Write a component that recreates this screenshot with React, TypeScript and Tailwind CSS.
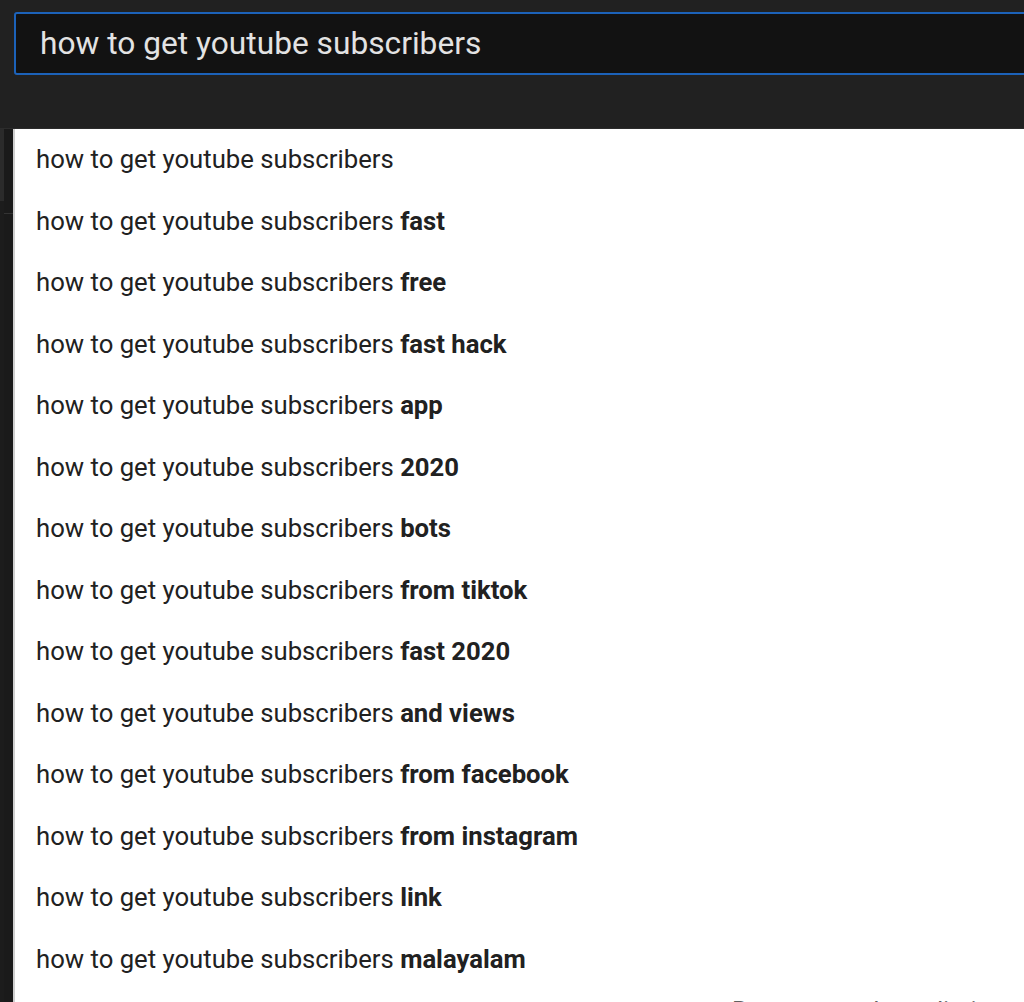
import React from 'react';

const query = 'how to get youtube subscribers';

const suggestions: string[] = [
  '',
  'fast',
  'free',
  'fast hack',
  'app',
  '2020',
  'bots',
  'from tiktok',
  'fast 2020',
  'and views',
  'from facebook',
  'from instagram',
  'link',
  'malayalam',
];

export default function App() {
  return (
    <div className="h-[1002px] w-[1024px] overflow-hidden bg-[#212121] font-['Roboto','Liberation_Sans',sans-serif]">
      {/* search bar */}
      <div className="h-[129px] border-b border-[#2c2c2c] pt-[12px] pl-[14px]">
        <div className="flex h-[63px] w-[1100px] items-center rounded-[3px] border-2 border-[#1c62b9] bg-[#121212] pl-[24px]">
          <span className="text-[31.7px] text-[#e3e3e3]">{query}</span>
        </div>
      </div>

      <div className="flex">
        {/* left page strip behind dropdown */}
        <div className="flex w-[13px] shrink-0">
          <div className="w-[4px] bg-[#1c1c1c]">
            <div className="h-[72px] bg-[#2b2b2b]" />
          </div>
          <div className="flex-1 bg-[#1a1a1a]">
            <div className="mt-[84px] h-px bg-[#333]" />
          </div>
        </div>
        <div className="w-[2px] shrink-0 bg-[#cfcfcf]" />

        {/* suggestions */}
        <div className="flex-1 bg-white">
          {suggestions.map((s, i) => (
            <div
              key={i}
              className="flex h-[61.5px] items-center pl-[21px] text-[25.7px] text-[#212121]"
            >
              <span>
                {query}
                {s && <b className="font-bold"> {s}</b>}
              </span>
            </div>
          ))}
          <div className="mt-[9px] pl-[717px] text-[25px] leading-none text-[#606060]">
            Report search predictions
          </div>
        </div>
      </div>
    </div>
  );
}
